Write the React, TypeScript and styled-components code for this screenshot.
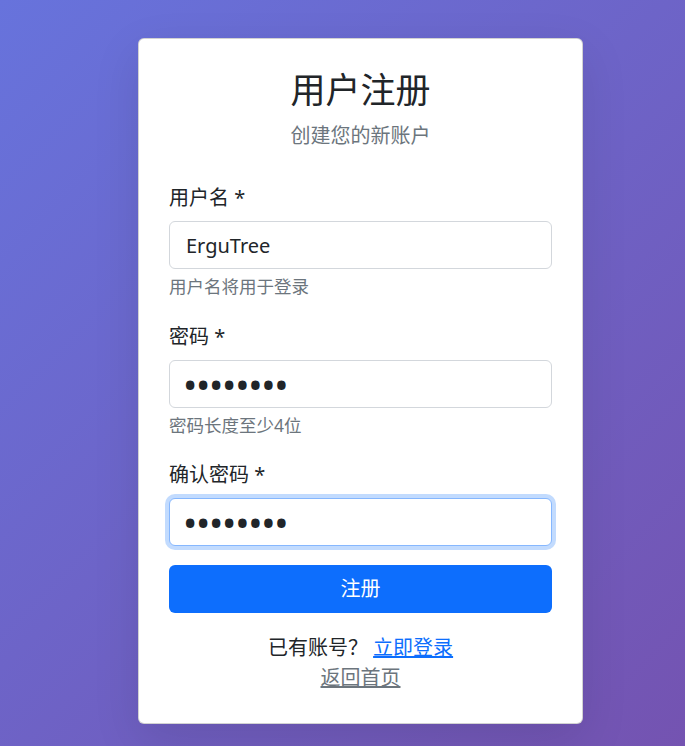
import React from "react";
import styled, { createGlobalStyle } from "styled-components";

const GlobalStyle = createGlobalStyle`
  html, body {
    margin: 0;
    padding: 0;
  }
  body {
    font-family: "Noto Sans", "Noto Sans CJK SC", sans-serif;
    color: #212529;
    background: linear-gradient(135deg, #6773dc 0%, #7453b1 100%);
    min-height: 100vh;
  }
  * { box-sizing: border-box; }
`;

const Page = styled.main`
  min-height: 100vh;
  padding: 38px 0 24px 138px;
  display: flex;
  align-items: flex-start;
`;

const Card = styled.section`
  width: 445px;
  background: #fff;
  border: 1px solid rgba(0, 0, 0, 0.175);
  border-radius: 6px;
  padding: 30px;
  box-shadow: 0 1rem 3rem rgba(0, 0, 0, 0.1);
`;

const Header = styled.header`
  text-align: center;
  margin-bottom: 32px;
`;

const Title = styled.h2`
  margin: 0 0 10px;
  font-size: 35px;
  line-height: 42px;
  font-weight: 400;
  color: #212529;
`;

const Subtitle = styled.p`
  margin: 0;
  font-size: 20px;
  line-height: 30px;
  color: #6c757d;
`;

const Form = styled.form`
  display: flex;
  flex-direction: column;
`;

const Field = styled.div`
  margin-bottom: 22px;

  &:last-of-type {
    margin-bottom: 19px;
  }
`;

const Label = styled.label`
  display: block;
  font-size: 20px;
  line-height: 30px;
  margin-bottom: 8px;
  color: #212529;
`;

const Input = styled.input<{ $focused?: boolean; $masked?: boolean }>`
  display: block;
  width: 100%;
  height: 48px;
  padding: 0 16px 0 ${(p) => (p.$masked ? "13px" : "16px")};
  font-family: "Noto Sans", "Noto Sans CJK SC", sans-serif;
  font-size: ${(p) => (p.$masked ? "38px" : "20px")};
  letter-spacing: ${(p) => (p.$masked ? "-1.25px" : "normal")};
  line-height: 46px;
  color: #212529;
  background: #fff;
  border: 1px solid ${(p) => (p.$focused ? "#86b7fe" : "#d3d7dc")};
  border-radius: 6px;
  outline: none;
  box-shadow: ${(p) =>
    p.$focused ? "0 0 0 4px rgba(13, 110, 253, 0.25)" : "none"};
`;

const Help = styled.div`
  margin-top: 4px;
  font-size: 17.5px;
  line-height: 26.5px;
  color: #6c757d;
`;

const SubmitButton = styled.button`
  display: block;
  width: 100%;
  height: 48px;
  border: none;
  border-radius: 6px;
  background: #0d6efd;
  color: #fff;
  font-family: "Noto Sans", "Noto Sans CJK SC", sans-serif;
  font-size: 20px;
  line-height: 30px;
  cursor: pointer;
`;

const Footer = styled.div`
  margin-top: 20px;
  text-align: center;
  font-size: 20px;
  line-height: 30px;
`;

const Line = styled.p`
  margin: 0;
`;

const Link = styled.a<{ $muted?: boolean }>`
  color: ${(p) => (p.$muted ? "#6c757d" : "#0d6efd")};
  text-decoration: underline;
`;

export default function App() {
  return (
    <>
      <GlobalStyle />
      <Page>
        <Card>
          <Header>
            <Title>用户注册</Title>
            <Subtitle>创建您的新账户</Subtitle>
          </Header>
          <Form onSubmit={(e) => e.preventDefault()}>
            <Field>
              <Label htmlFor="username">用户名 *</Label>
              <Input id="username" type="text" defaultValue="ErguTree" />
              <Help>用户名将用于登录</Help>
            </Field>
            <Field>
              <Label htmlFor="password">密码 *</Label>
              <Input
                id="password"
                type="password"
                defaultValue="12345678"
                $masked
              />
              <Help>密码长度至少4位</Help>
            </Field>
            <Field>
              <Label htmlFor="confirm">确认密码 *</Label>
              <Input
                id="confirm"
                type="password"
                defaultValue="12345678"
                $masked
                $focused
              />
            </Field>
            <SubmitButton type="submit">注册</SubmitButton>
          </Form>
          <Footer>
            <Line>
              已有账号？ <Link href="#">立即登录</Link>
            </Line>
            <Line>
              <Link href="#" $muted>
                返回首页
              </Link>
            </Line>
          </Footer>
        </Card>
      </Page>
    </>
  );
}
